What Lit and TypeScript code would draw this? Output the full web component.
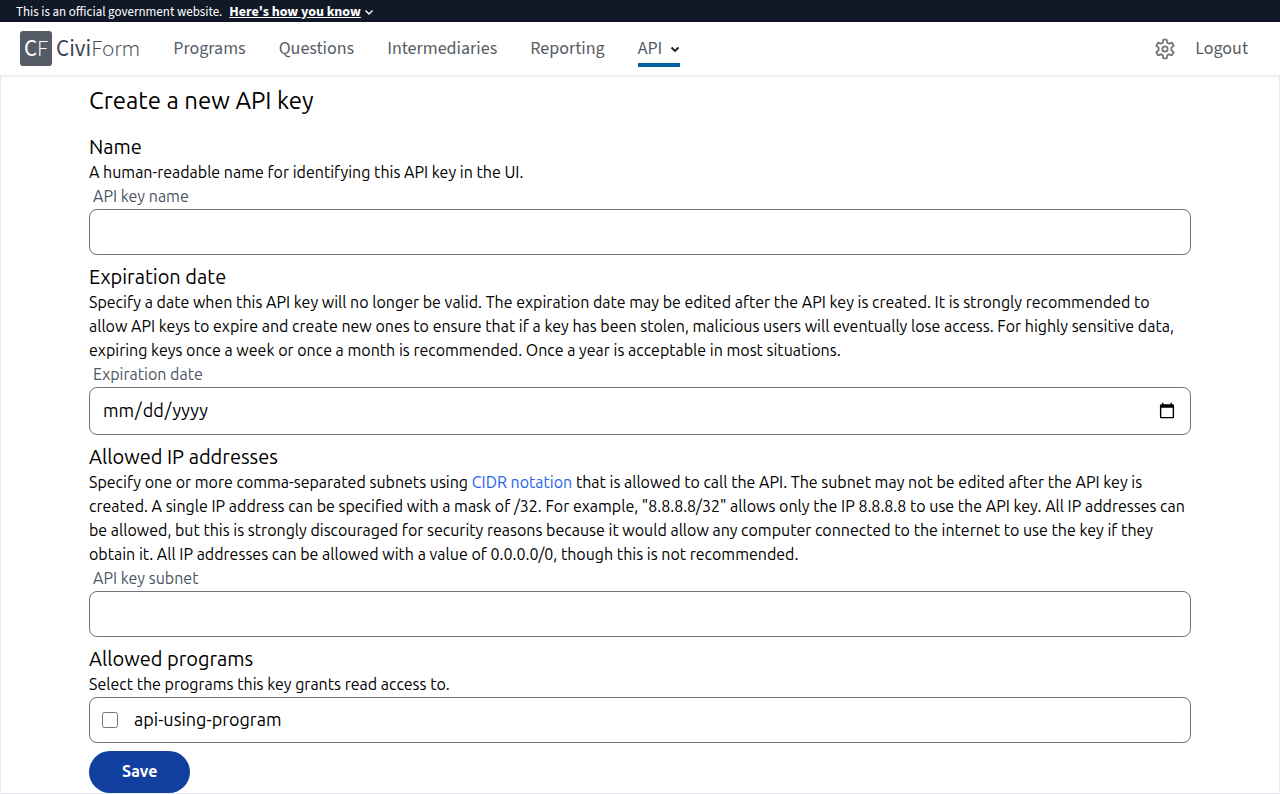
import { LitElement, html, css, svg } from "lit";
import { customElement, state } from "lit/decorators.js";

const chevron = (stroke: number) => svg`
  <path d="M1.5 2.5 L5 6 L8.5 2.5" fill="none" stroke="currentColor" stroke-width=${stroke} />
`;

@customElement("gov-banner")
class GovBanner extends LitElement {
  static styles = css`
    :host {
      display: block;
      background: #111827;
      color: #fff;
      font-family: "Source Sans Pro", "Source Sans 3", "Noto Sans CJK JP", "Noto Sans", sans-serif;
      font-size: 13px;
      line-height: 22px;
    }
    .bar {
      display: flex;
      align-items: center;
      box-sizing: border-box;
      height: 22px;
      padding: 1px 16px 0;
      gap: 7px;
    }
    .toggle {
      display: flex;
      align-items: center;
      gap: 3px;
      padding: 0;
      border: 0;
      background: none;
      color: inherit;
      font: inherit;
      font-size: 14px;
      font-weight: 700;
      line-height: 22px;
      cursor: pointer;
    }
    .toggle span {
      text-decoration: underline;
    }
  `;

  render() {
    return html`
      <div class="bar">
        <span>This is an official government website.</span>
        <button class="toggle" type="button">
          <span>Here's how you know</span>
          <svg width="10" height="8" viewBox="0 0 10 8" aria-hidden="true">${chevron(1.4)}</svg>
        </button>
      </div>
    `;
  }
}

@customElement("admin-header")
class AdminHeader extends LitElement {
  static styles = css`
    :host {
      display: block;
      position: relative;
      background: #fff;
      box-shadow: 0 1px 3px rgba(0, 0, 0, 0.12);
      color: #565c65;
      font-family: "Source Sans Pro", "Source Sans 3", "Noto Sans CJK JP", "Noto Sans", sans-serif;
      font-size: 18px;
    }
    .bar {
      display: flex;
      align-items: center;
      height: 53px;
      padding: 0 32px 0 20px;
    }
    a,
    button {
      padding: 0;
      border: 0;
      background: none;
      color: inherit;
      font: inherit;
      line-height: 24px;
      text-decoration: none;
      cursor: pointer;
    }
    .brand {
      display: flex;
      align-items: center;
      gap: 4px;
      margin-right: 33px;
      color: #3d4551;
      font-size: 23px;
      line-height: 36px;
    }
    .mark {
      width: 32px;
      height: 35px;
      border-radius: 3px;
      background: #565c65;
      color: #fff;
      text-align: center;
    }
    .thin {
      font-weight: 300;
    }
    .links {
      display: flex;
      flex: 1;
      align-items: stretch;
      gap: 33px;
      height: 37px;
    }
    .links a,
    .menu {
      box-sizing: border-box;
      padding: 7px 0 2px;
      border-bottom: 4px solid transparent;
    }
    .menu {
      display: flex;
      align-items: center;
      gap: 8px;
      border-color: #005ea2;
    }
    .menu svg {
      color: #1b1b1b;
    }
    .tools {
      display: flex;
      align-items: center;
      gap: 19px;
    }
    .gear {
      display: flex;
      color: #71767a;
    }
  `;

  render() {
    return html`
      <nav class="bar" aria-label="Primary">
        <a class="brand" href="#">
          <span class="mark">C<span class="thin">F</span></span>
          <span>Civi<span class="thin">Form</span></span>
        </a>
        <div class="links">
          ${["Programs", "Questions", "Intermediaries", "Reporting"].map(
            (name) => html`<a href="#">${name}</a>`
          )}
          <button class="menu" type="button">
            <span>API</span>
            <svg width="10" height="8" viewBox="0 0 10 8" aria-hidden="true">${chevron(1.8)}</svg>
          </button>
        </div>
        <div class="tools">
          <a class="gear" href="#" aria-label="Settings">
            <svg width="22" height="22" viewBox="1 1 22 22" fill="none" stroke="currentColor" stroke-width="1.8" stroke-linejoin="round" aria-hidden="true">
              <path
                d="M10.3 2.7h3.4l.5 2.9 1.9 1.1 2.8-1 1.8 3-2.3 1.9v2.8l2.3 1.9-1.8 3-2.8-1-1.9 1.1-.5 2.9h-3.4l-.5-2.9-1.9-1.1-2.8 1-1.8-3 2.3-1.9v-2.8L3.3 8.7l1.8-3 2.8 1 1.9-1.1z"
              />
              <circle cx="12" cy="12" r="2.7" />
            </svg>
          </a>
          <a href="#">Logout</a>
        </div>
      </nav>
    `;
  }
}

@customElement("api-key-form")
class ApiKeyForm extends LitElement {
  @state() private programs = ["api-using-program"];

  static styles = css`
    :host {
      display: block;
      border: 1px solid #e5e7eb;
      border-top: 0;
      padding: 10px 88px 0;
      color: #000;
      font-family: Ubuntu, "Noto Sans", sans-serif;
      font-size: 16px;
      line-height: 24px;
    }
    h1,
    h2,
    p {
      margin: 0;
      font-weight: 400;
    }
    h1 {
      font-size: 24px;
      line-height: 32px;
      margin-bottom: 17px;
    }
    h2 {
      font-size: 20px;
      line-height: 26px;
    }
    a {
      color: #2563eb;
      text-decoration: none;
    }
    section {
      margin-bottom: 9px;
    }
    .label {
      display: block;
      padding-left: 4px;
      color: #4b5563;
    }
    .field {
      display: block;
      box-sizing: border-box;
      width: 100%;
      height: 46px;
      margin: 1px 0 0;
      padding: 8px 12px 9px;
      border: 1px solid #6b7280;
      border-radius: 8px;
      background: #fff;
      color: #000;
      font: inherit;
      font-size: 18px;
      line-height: 27px;
    }
    .date {
      height: 48px;
    }
    .choice {
      display: flex;
      align-items: center;
      gap: 16px;
    }
    .choice input {
      width: 16px;
      height: 16px;
      margin: 0;
    }
    .save {
      display: block;
      height: 42px;
      margin-top: 8px;
      padding: 0 33px 2px;
      border: 0;
      border-radius: 21px;
      background: #113f9f;
      color: #fff;
      font: inherit;
      font-weight: 600;
      cursor: pointer;
    }
    .last {
      margin: 0;
    }
  `;

  render() {
    return html`
      <form>
        <h1>Create a new API key</h1>
        <section>
          <h2>Name</h2>
          <p>A human-readable name for identifying this API key in the UI.</p>
          <label class="label" for="key-name">API key name</label>
          <input class="field" id="key-name" type="text" />
        </section>
        <section>
          <h2>Expiration date</h2>
          <p>
            Specify a date when this API key will no longer be valid. The expiration date may be
            edited after the API key is created. It is strongly recommended to allow API keys to
            expire and create new ones to ensure that if a key has been stolen, malicious users will
            eventually lose access. For highly sensitive data, expiring keys once a week or once a
            month is recommended. Once a year is acceptable in most situations.
          </p>
          <label class="label" for="expiration">Expiration date</label>
          <input class="field date" id="expiration" type="date" />
        </section>
        <section>
          <h2>Allowed IP addresses</h2>
          <p>
            Specify one or more comma-separated subnets using
            <a href="#">CIDR notation</a> that is allowed to call the API. The subnet may not be
            edited after the API key is created. A single IP address can be specified with a mask of
            /32. For example, "8.8.8.8/32" allows only the IP 8.8.8.8 to use the API key. All IP
            addresses can be allowed, but this is strongly discouraged for security reasons because
            it would allow any computer connected to the internet to use the key if they obtain it.
            All IP addresses can be allowed with a value of 0.0.0.0/0, though this is not
            recommended.
          </p>
          <label class="label" for="subnet">API key subnet</label>
          <input class="field" id="subnet" type="text" />
        </section>
        <section class="last">
          <h2>Allowed programs</h2>
          <p>Select the programs this key grants read access to.</p>
          ${this.programs.map(
            (name) => html`
              <label class="field choice"><input type="checkbox" /><span>${name}</span></label>
            `
          )}
        </section>
        <button class="save" type="button">Save</button>
      </form>
    `;
  }
}

@customElement("app-root")
class AppRoot extends LitElement {
  static styles = css`
    :host {
      display: block;
      min-height: 100vh;
      background: #fff;
    }
  `;

  render() {
    return html`
      <gov-banner></gov-banner>
      <admin-header></admin-header>
      <main><api-key-form></api-key-form></main>
    `;
  }
}
